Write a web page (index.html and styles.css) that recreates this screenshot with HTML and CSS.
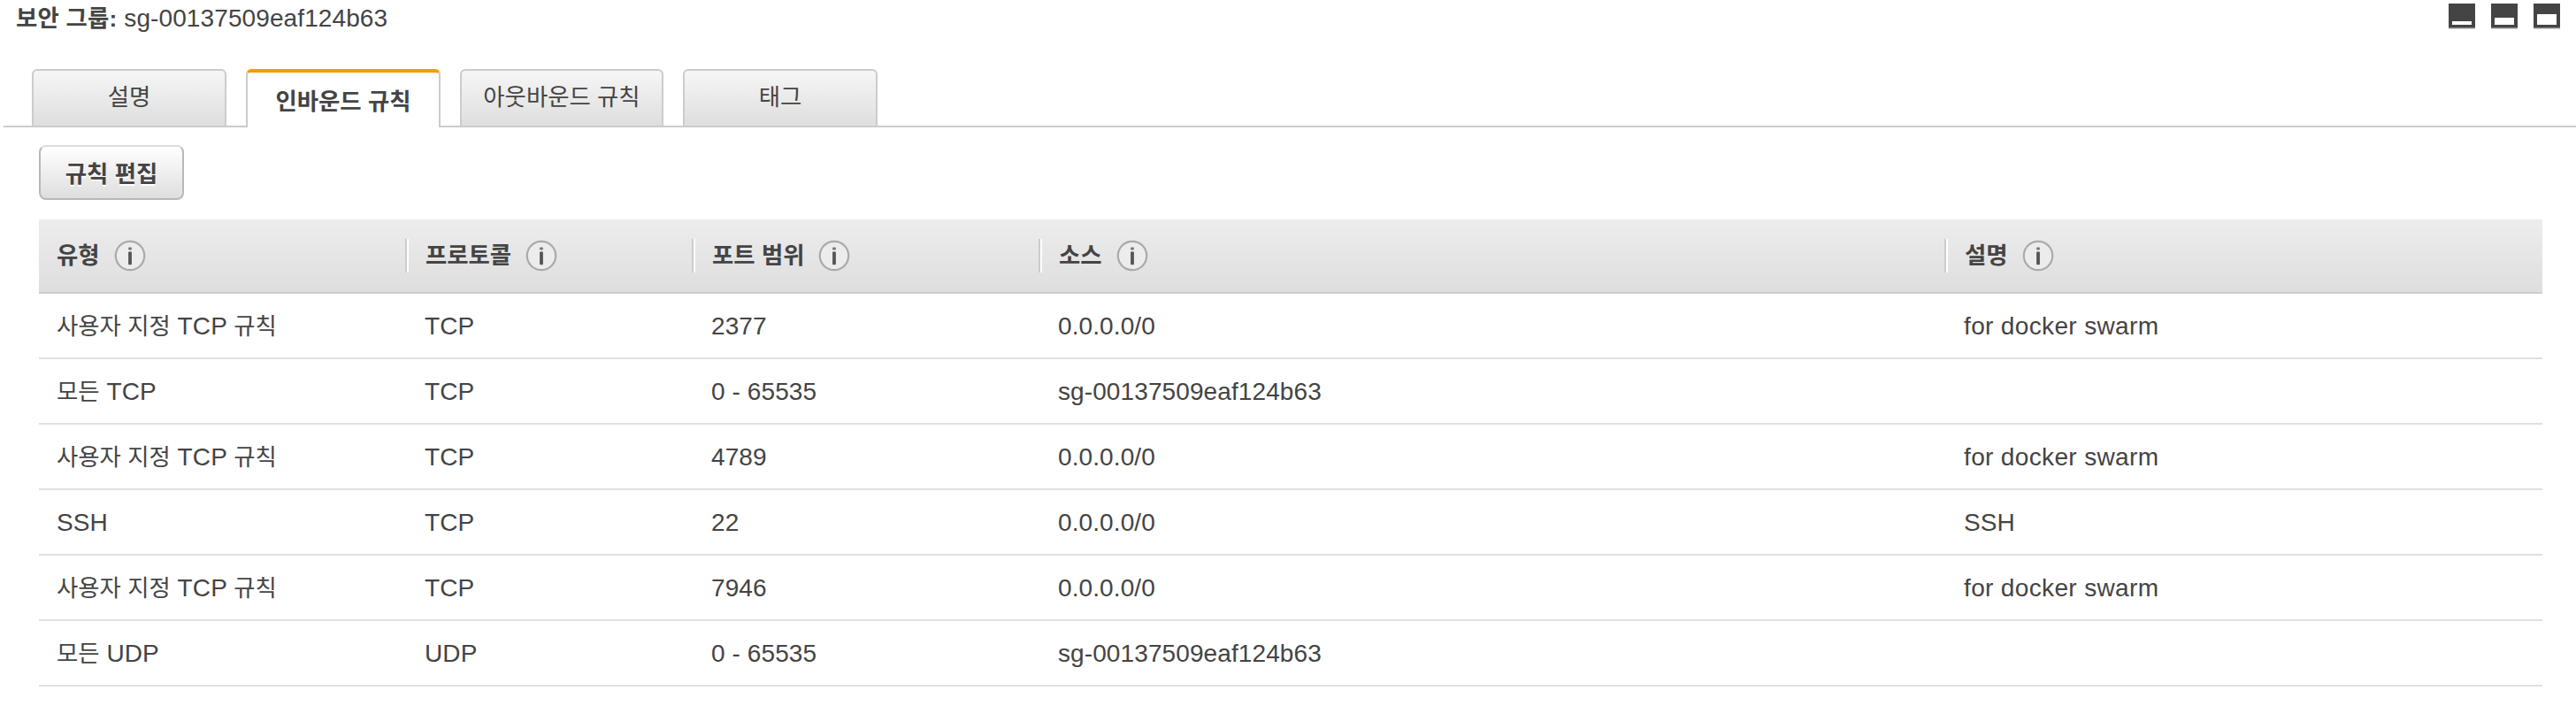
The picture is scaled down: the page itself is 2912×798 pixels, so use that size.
FILE: index.html
```html
<!DOCTYPE html>
<html lang="ko">
<head>
<meta charset="utf-8">
<title>보안 그룹</title>
<link rel="stylesheet" href="styles.css">
</head>
<body>
<svg class="defs" aria-hidden="true">
  <symbol id="info" viewBox="0 0 36 36">
    <circle cx="18" cy="18" r="16.2" fill="#ececec" stroke="#aaa" stroke-width="2.2"/>
    <rect x="16.1" y="8.4" width="3.8" height="3.2" rx="1" fill="#777"/>
    <rect x="16.1" y="13.6" width="3.8" height="14.6" rx=".8" fill="#555"/>
  </symbol>
</svg>
<header class="top">
  <div class="title"><b class="ko">보안 그룹:</b> sg-00137509eaf124b63</div>
  <div class="layout">
    <svg width="30" height="29"><path fill="#444" d="M0 0h30v27H0z"/><path fill="#888" d="M0 27h30v1H0z"/><path fill="#ccc" d="M0 28h30v1H0z"/><path fill="#fff" d="M4 20h22v4H4z"/></svg>
    <svg width="30" height="29"><path fill="#444" d="M0 0h30v27H0z"/><path fill="#888" d="M0 27h30v1H0z"/><path fill="#ccc" d="M0 28h30v1H0z"/><path fill="#fff" d="M4 16h22v8H4z"/></svg>
    <svg width="30" height="29"><path fill="#444" d="M0 0h30v27H0z"/><path fill="#888" d="M0 27h30v1H0z"/><path fill="#ccc" d="M0 28h30v1H0z"/><path fill="#fff" d="M4 12h22v12H4z"/></svg>
  </div>
</header>
<nav class="tabs">
  <div class="tab"><span class="ko">설명</span></div>
  <div class="tab active"><span class="ko">인바운드 규칙</span></div>
  <div class="tab wide"><span class="ko">아웃바운드 규칙</span></div>
  <div class="tab"><span class="ko">태그</span></div>
</nav>
<main>
  <button class="edit"><span class="ko">규칙 편집</span></button>
  <div class="table">
    <div class="row head">
      <div><span class="ko">유형</span><svg class="info"><use href="#info"/></svg></div>
      <div><span class="ko">프로토콜</span><svg class="info"><use href="#info"/></svg></div>
      <div><span class="ko">포트 범위</span><svg class="info"><use href="#info"/></svg></div>
      <div><span class="ko">소스</span><svg class="info"><use href="#info"/></svg></div>
      <div><span class="ko">설명</span><svg class="info"><use href="#info"/></svg></div>
    </div>
    <div class="row"><div><span class="ko">사용자 지정</span> TCP <span class="ko">규칙</span></div><div>TCP</div><div>2377</div><div>0.0.0.0/0</div><div class="note">for docker swarm</div></div>
    <div class="row"><div><span class="ko">모든</span> TCP</div><div>TCP</div><div>0 - 65535</div><div>sg-00137509eaf124b63</div><div></div></div>
    <div class="row"><div><span class="ko">사용자 지정</span> TCP <span class="ko">규칙</span></div><div>TCP</div><div>4789</div><div>0.0.0.0/0</div><div class="note">for docker swarm</div></div>
    <div class="row"><div>SSH</div><div>TCP</div><div>22</div><div>0.0.0.0/0</div><div>SSH</div></div>
    <div class="row"><div><span class="ko">사용자 지정</span> TCP <span class="ko">규칙</span></div><div>TCP</div><div>7946</div><div>0.0.0.0/0</div><div class="note">for docker swarm</div></div>
    <div class="row"><div><span class="ko">모든</span> UDP</div><div>UDP</div><div>0 - 65535</div><div>sg-00137509eaf124b63</div><div></div></div>
  </div>
</main>
</body>
</html>
```
FILE: styles.css
```css
* { box-sizing: border-box; }
body {
  margin: 0;
  background: #fff;
  color: #444;
  font: 28px/42px "Liberation Sans", "Noto Sans CJK KR", sans-serif;
  letter-spacing: .1px;
}
.defs { display: none; }
.ko { font-size: 26.4px; line-height: 1; letter-spacing: 0; }
.top {
  display: flex;
  justify-content: space-between;
  height: 78px;
  padding: 0 18px;
}
.title { white-space: pre; }
.title .ko { letter-spacing: .2px; }
.layout { display: flex; gap: 18px; padding-top: 4px; }
.layout svg { display: block; }
.tabs {
  display: flex;
  gap: 22px;
  height: 66px;
  margin-left: 4px;
  padding-left: 32px;
  border-bottom: 2px solid #ccc;
}
.tab {
  width: 220px;
  height: 64px;
  border: 2px solid #ccc;
  border-bottom: 0;
  border-radius: 6px 6px 0 0;
  background: linear-gradient(#f6f6f6, #dedede);
  line-height: 60px;
  text-align: center;
}
.wide { width: 230px; }
.active {
  height: 66px;
  border-top: 4px solid #f90;
  background: #fff;
  font-weight: bold;
  line-height: 65px;
}
main { padding: 20px 38px 0 44px; }
.edit {
  display: block;
  width: 164px;
  height: 62px;
  padding: 2px 0 0;
  border: 2px solid #b8b8b8;
  border-top-color: #ddd;
  border-radius: 8px;
  background: linear-gradient(#fff, #dedede);
  color: #444;
  font: bold 28px/58px "Liberation Sans", "Noto Sans CJK KR", sans-serif;
  text-shadow: 0 2px 0 #fff;
}
.table { margin-top: 22px; }
.row {
  display: grid;
  grid-template-columns: 414px 324px 392px 1024px 1fr;
  height: 74px;
  border-bottom: 2px solid #e0e0e0;
  line-height: 74px;
  white-space: pre;
}
.row > div { padding-left: 22px; }
.row > div:first-child { padding-left: 20px; }
.row .note { letter-spacing: .35px; }
.head {
  height: 84px;
  align-items: center;
  border-color: #ccc;
  background: linear-gradient(#ededed, #dedede);
  font-weight: bold;
}
.head > div {
  display: flex;
  align-items: center;
  gap: 16px;
  height: 38px;
  line-height: 38px;
}
.head > div + div {
  padding-left: 21px;
  border-left: 2px solid #ccc;
  box-shadow: inset 2px 0 #fff;
}
.info { width: 36px; height: 36px; }
```
